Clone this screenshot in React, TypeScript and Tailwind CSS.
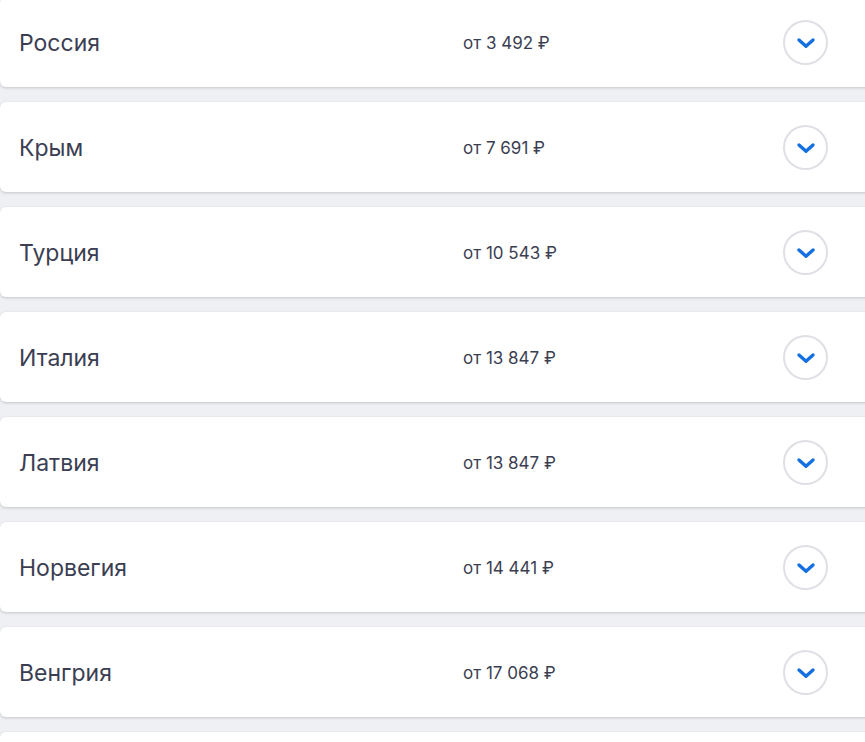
import React from "react";

const items = [
  { name: "Россия", price: "от 3 492 ₽" },
  { name: "Крым", price: "от 7 691 ₽" },
  { name: "Турция", price: "от 10 543 ₽" },
  { name: "Италия", price: "от 13 847 ₽" },
  { name: "Латвия", price: "от 13 847 ₽" },
  { name: "Норвегия", price: "от 14 441 ₽" },
  { name: "Венгрия", price: "от 17 068 ₽" },
];

function Chevron() {
  return (
    <div className="flex h-[45px] w-[45px] items-center justify-center rounded-full border-2 border-[#dfe0e6]">
      <svg width="20" height="12" viewBox="0 0 20 12" fill="none" className="mt-[1px]">
        <path
          d="M3 3l7 6.2 7-6.2"
          stroke="#1470e0"
          strokeWidth="3.4"
          strokeLinecap="round"
          strokeLinejoin="round"
        />
      </svg>
    </div>
  );
}

export default function App() {
  return (
    <div
      className="w-[865px] h-[742px] overflow-hidden bg-[#eef0f4]"
      style={{ fontFamily: "Inter, 'Noto Sans', sans-serif" }}
    >
      <div className="-mt-[3px] flex w-[880px] flex-col gap-[15px]">
        {items.map((it) => (
          <div
            key={it.name}
            className="flex h-[90px] items-center rounded-[6px] bg-white shadow-[0_1px_3px_rgba(0,0,0,0.18)]"
          >
            <div className="w-[463px] pl-[19px] pt-[3px] text-[23px] text-[#3b3e52]">{it.name}</div>
            <div className="w-[320px] pt-[3px] text-[17px] text-[#3b3e52]">{it.price}</div>
            <Chevron />
          </div>
        ))}
        <div className="h-[90px] rounded-[6px] bg-white shadow-[0_1px_3px_rgba(0,0,0,0.18)]" />
      </div>
    </div>
  );
}
